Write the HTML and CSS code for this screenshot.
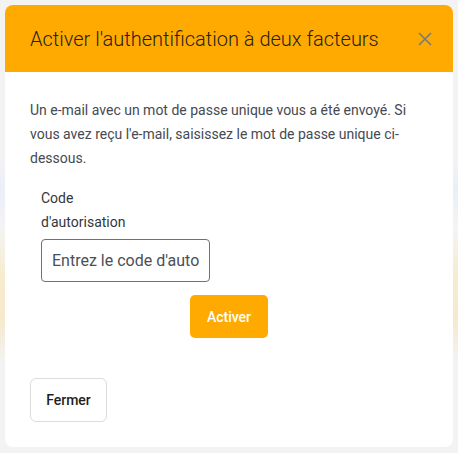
FILE: index.html
```html
<!DOCTYPE html>
<html lang="fr">
<head>
<meta charset="utf-8">
<link rel="stylesheet" href="styles.css">
</head>
<body>
<div class="modal">
  <div class="modal-header">
    <h1 class="modal-title">Activer l'authentification à deux facteurs</h1>
    <button class="close" aria-label="Fermer">
      <svg width="14" height="14" viewBox="0 0 14 14"><path d="M1 1L13 13M13 1L1 13" stroke="#737a82" stroke-width="1.6" fill="none"/></svg>
    </button>
  </div>
  <div class="modal-body">
    <p class="intro">Un e-mail avec un mot de passe unique vous a été envoyé. Si vous avez reçu l'e-mail, saisissez le mot de passe unique ci-dessous.</p>
    <div class="form-group">
      <label class="label" for="code">Code d'autorisation</label>
      <input id="code" class="input" type="text" placeholder="Entrez le code d'autorisation">
    </div>
    <div class="actions">
      <button class="btn-primary">Activer</button>
    </div>
    <button class="btn-secondary">Fermer</button>
  </div>
</div>
</body>
</html>
```
FILE: styles.css
```css
* { box-sizing: border-box; }
html, body { margin: 0; padding: 0; }
body {
  width: 458px;
  height: 453px;
  font-family: Roboto, "Liberation Sans", sans-serif;
  background: linear-gradient(180deg, #f3f3f4 0%, #f3f3f4 35%, #eaeef7 42%, #f4f4f4 50%, #f7ebcd 62%, #f6e9cc 70%, #f3f3f3 80%, #f3f3f3 100%);
  padding: 5px;
  overflow: hidden;
}
.modal {
  width: 448px;
  height: 442px;
  background: #fff;
  border-radius: 8px;
  overflow: hidden;
}
.modal-header {
  height: 67px;
  background: #ffaa00;
  display: flex;
  align-items: center;
  justify-content: space-between;
  padding: 0 21px 0 25px;
}
.modal-title {
  margin: 0;
  font-size: 20px;
  font-weight: 300;
  color: #1f1f1f;
  letter-spacing: 0;
}
.close {
  background: none;
  border: 0;
  padding: 0;
  width: 14px;
  height: 14px;
  display: flex;
}
.modal-body {
  padding: 26px 25px 25px;
}
.intro {
  margin: 0;
  font-size: 14px;
  line-height: 24px;
  color: #454a52;
}
.form-group {
  margin: 16px 0 0 11px;
  width: 169px;
  display: flex;
  flex-direction: column;
}
.label {
  font-size: 14px;
  line-height: 24px;
  color: #33373d;
  width: 120px;
}
.input {
  margin-top: 5px;
  width: 169px;
  height: 43px;
  border: 1px solid #6c7178;
  border-radius: 4px;
  padding: 0 10px;
  font-family: Roboto, "Liberation Sans", sans-serif;
  font-size: 16px;
  color: #333;
}
.input::placeholder { color: #4b4f55; opacity: 1; }
.actions {
  display: flex;
  justify-content: center;
  margin-top: 13px;
}
.btn-primary {
  width: 78px;
  height: 43px;
  background: #ffaa00;
  border: 0;
  border-radius: 5px;
  color: #fff;
  font-family: Roboto, "Liberation Sans", sans-serif;
  font-size: 14px;
  font-weight: 500;
}
.btn-secondary {
  margin-top: 40px;
  width: 77px;
  height: 44px;
  background: #fff;
  border: 1px solid #dcdcdc;
  border-radius: 6px;
  color: #1e1e1e;
  font-family: Roboto, "Liberation Sans", sans-serif;
  font-size: 14px;
  font-weight: 500;
}
```
